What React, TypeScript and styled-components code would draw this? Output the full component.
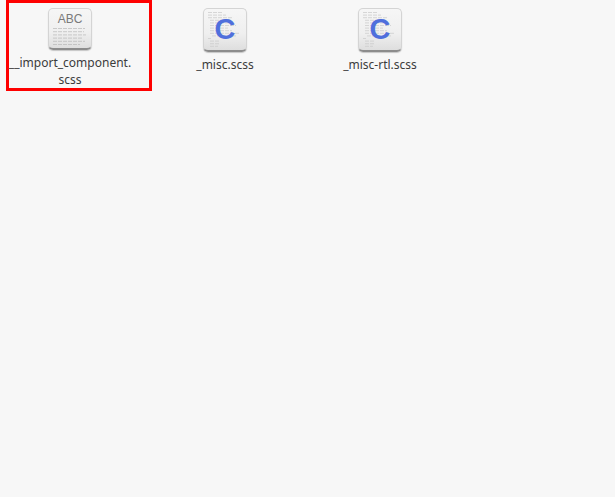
import React from 'react';
import styled, { createGlobalStyle } from 'styled-components';

const GlobalStyle = createGlobalStyle`
  html, body {
    margin: 0;
    height: 100%;
    background: #f7f7f7;
  }
  body {
    font-family: "Noto Sans", "Open Sans", sans-serif;
  }
`;

const Grid = styled.div`
  display: flex;
  flex-direction: row;
  align-items: flex-start;
  gap: 9px;
  padding-left: 6px;
`;

const Item = styled.div<{ $selected?: boolean }>`
  width: 146px;
  height: 91px;
  box-sizing: border-box;
  border: 3px solid ${({ $selected }) => ($selected ? '#fe0000' : 'transparent')};
  padding: 5px 18px 0 0;
  display: flex;
  flex-direction: column;
  align-items: center;
`;

const Sheet = styled.div`
  width: 44px;
  height: 44px;
  box-sizing: border-box;
  position: relative;
  border-radius: 5px;
  border: 1px solid #d4d4d4;
  border-bottom: 2px solid #8c8c8c;
  background: linear-gradient(#f6f6f6, #efefef 60%, #dedede);
  box-shadow: 0 1px 1px rgba(0, 0, 0, 0.2);
  overflow: hidden;
`;

const Abc = styled.div`
  font-family: "Liberation Sans", sans-serif;
  font-size: 12px;
  line-height: 13px;
  color: #7a7a7a;
  text-align: center;
  margin-top: 4px;
`;

const BigC = styled.div`
  position: absolute;
  inset: 0;
  text-align: center;
  font-family: "Liberation Sans", sans-serif;
  font-weight: 700;
  font-size: 29px;
  line-height: 41px;
  color: #4f6fdc;
`;

const Lines = styled.svg`
  display: block;
`;

const Name = styled.div`
  margin-top: 4px;
  width: 125px;
  font-size: 12px;
  line-height: 17px;
  color: #3c3c3c;
  text-align: center;
`;

const textRows = [
  [4, 32],
  [4, 31],
  [4, 33],
  [4, 30],
  [4, 32],
  [4, 27],
];

const codeRows = [
  [4, 14],
  [4, 18],
  [4, 24],
  [6, 16],
  [6, 20],
  [6, 26],
  [6, 18],
  [6, 22],
  [6, 30],
  [8, 24],
  [4, 3],
  [6, 10],
  [6, 10],
  [6, 8],
];

const TextIcon: React.FC = () => (
  <Sheet>
    <Abc>ABC</Abc>
    <Lines width="42" height="24" viewBox="0 0 42 24">
      {textRows.map(([x, w], i) => (
        <line key={i} x1={x} x2={x + w} y1={2.5 + i * 3.2} y2={2.5 + i * 3.2} stroke="#b8b8b8" strokeWidth="0.7" strokeDasharray="4 1" />
      ))}
    </Lines>
  </Sheet>
);

const CodeIcon: React.FC = () => (
  <Sheet>
    <Lines width="42" height="42" viewBox="0 0 42 42">
      {codeRows.map(([x, w], i) => (
        <line key={i} x1={x} x2={x + w} y1={3.5 + i * 2.6} y2={3.5 + i * 2.6} stroke="#c8c8c8" strokeWidth="0.7" strokeDasharray="4 1" />
      ))}
    </Lines>
    <BigC>C</BigC>
  </Sheet>
);

const App: React.FC = () => (
  <>
    <GlobalStyle />
    <Grid>
      <Item $selected>
        <TextIcon />
        <Name>
          __import_component.
          <wbr />
          scss
        </Name>
      </Item>
      <Item>
        <CodeIcon />
        <Name>_misc.scss</Name>
      </Item>
      <Item>
        <CodeIcon />
        <Name>_misc-rtl.scss</Name>
      </Item>
    </Grid>
  </>
);

export default App;
